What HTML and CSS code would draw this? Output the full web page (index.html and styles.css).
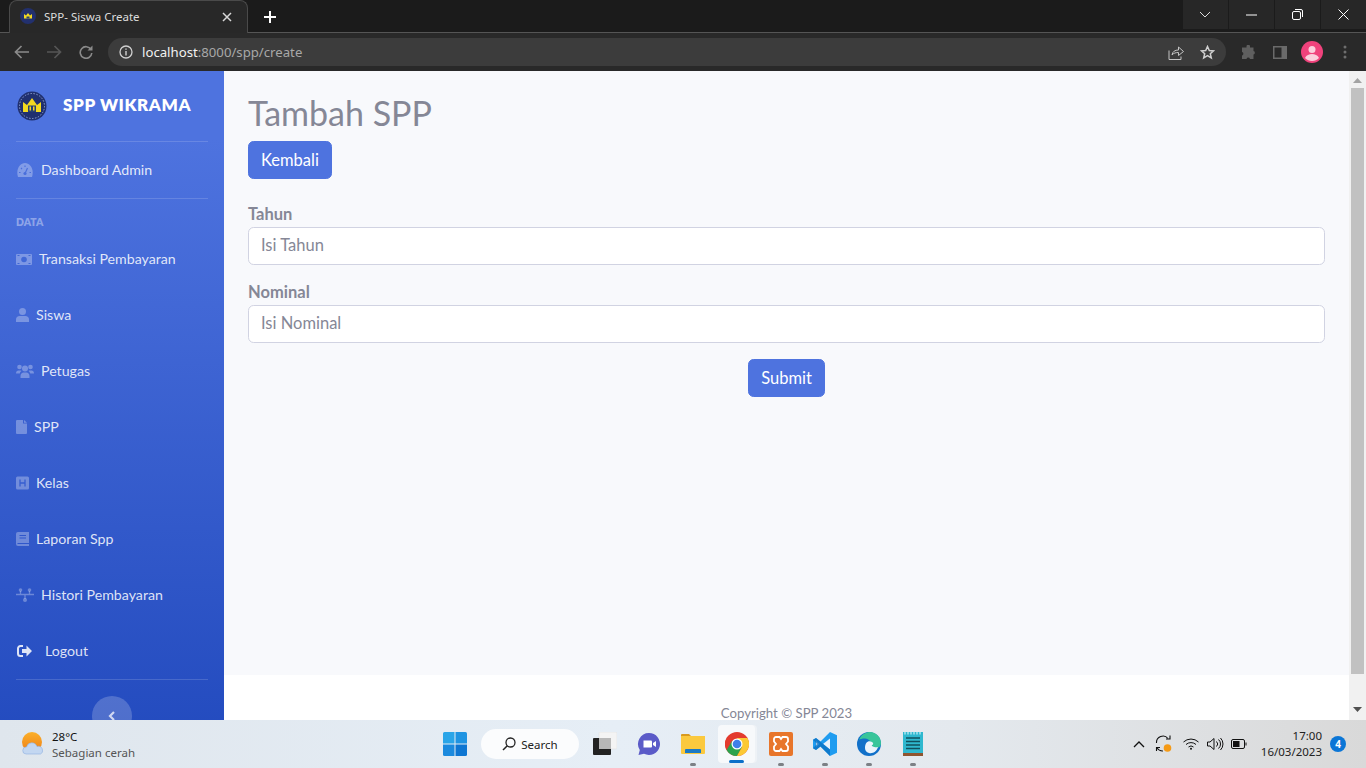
FILE: index.html
```html
<!DOCTYPE html>
<html lang="id">
<head>
<meta charset="utf-8">
<title>SPP- Siswa Create</title>
<link rel="stylesheet" href="styles.css">
</head>
<body>
<header class="browser">
  <div class="tabstrip">
    <div class="tab">
      <svg class="favicon" width="16" height="16" viewBox="0 0 16 16"><circle cx="8" cy="8" r="8" fill="#22306e"/><path d="M4 10.500V6l2 1.500L8 5l2 2.500L12 6v4.500z" fill="#f3d821"/><path d="M6.500 8.500h3v2h-3z" fill="#28406f"/></svg>
      <span class="tab-title">SPP- Siswa Create</span>
      <svg class="tab-close" width="10" height="10" viewBox="0 0 10 10"><path d="M1 1l8 8M9 1l-8 8" stroke="#d8d8d8" stroke-width="1.500"/></svg>
    </div>
    <svg class="newtab" width="12" height="12" viewBox="0 0 12 12"><path d="M6 0v12M0 6h12" stroke="#fff" stroke-width="2"/></svg>
    <div class="winctl">
      <div class="winbtn win-first"><svg width="12" height="8" viewBox="0 0 12 8"><path d="M1 1l5 5 5-5" fill="none" stroke="#ddd"/></svg></div>
      <div class="winbtn"><svg width="11" height="2" viewBox="0 0 11 2"><path d="M0 1h11" stroke="#fff"/></svg></div>
      <div class="winbtn"><svg width="11" height="11" viewBox="0 0 11 11"><rect x=".5" y="2.500" width="8" height="8" rx="1.500" fill="none" stroke="#fff"/><path d="M3 .5h6a1.500 1.500 0 0 1 1.500 1.500v6" fill="none" stroke="#fff"/></svg></div>
      <div class="winbtn"><svg width="11" height="11" viewBox="0 0 11 11"><path d="M.5.5l10 10M10.500.5l-10 10" stroke="#fff"/></svg></div>
    </div>
  </div>
  <div class="toolbar">
    <svg class="tb-back" width="16" height="14" viewBox="0 0 16 14"><path d="M15 7H2M7.500 1L1.500 7l6 6" fill="none" stroke="#8a8a8a" stroke-width="1.700"/></svg>
    <svg class="tb-fwd" width="16" height="14" viewBox="0 0 16 14"><path d="M1 7h13M8.500 1l6 6-6 6" fill="none" stroke="#565656" stroke-width="1.700"/></svg>
    <svg class="tb-reload" width="14" height="14" viewBox="0 0 14 14"><path d="M12 4.500A5.800 5.800 0 1 0 12.800 8" fill="none" stroke="#8a8a8a" stroke-width="1.600"/><path d="M13.500 .5v5h-5z" fill="#8a8a8a"/></svg>
    <div class="omnibox">
      <svg class="info" width="14" height="14" viewBox="0 0 14 14"><circle cx="7" cy="7" r="6" fill="none" stroke="#d0d0d0" stroke-width="1.300"/><path d="M7 6v4.500M7 3.500v1.300" stroke="#d0d0d0" stroke-width="1.400"/></svg>
      <span class="url"><b>localhost</b>:8000/spp/create</span>
      <svg class="share" width="16" height="15" viewBox="0 0 16 15"><path d="M1 5.500v9h12v-3" fill="none" stroke="#c4c4c4"/><path d="M4 10c.5-3.500 3-5 6.500-5V2l5 4.500-5 4V7.500C8 7.500 5.500 8 4 10z" fill="none" stroke="#c4c4c4"/></svg>
      <svg class="star" width="15" height="15" viewBox="0 0 15 15"><path d="M7.500 1.500l1.800 4 4.200.4-3.200 2.800 1 4.200-3.800-2.200-3.800 2.200 1-4.200L1.500 5.900l4.200-.4z" fill="none" stroke="#d0d0d0" stroke-width="1.500"/></svg>
    </div>
    <svg class="tb-ext" width="15" height="15" viewBox="0 0 15 15"><path d="M5.500 1a1.800 1.800 0 0 1 3.500 0v1.500h3.500V6a1.800 1.800 0 0 1 0 3.500V14H9a1.800 1.800 0 0 0-3.500 0H1v-3.500a1.800 1.800 0 0 0 0-3.500V2.500h4.500z" fill="#5f5f5f"/></svg>
    <svg class="tb-side" width="14" height="13" viewBox="0 0 14 13"><path d="M0 0h14v13H0z" fill="#6a6a6a"/><path d="M1.500 1.500h7v10h-7z" fill="#292929"/></svg>
    <svg class="tb-avatar" width="22" height="22" viewBox="0 0 22 22"><circle cx="11" cy="11" r="11" fill="#f0427c"/><circle cx="11" cy="8.500" r="3.500" fill="#fbcfdd"/><path d="M4 17c1.500-3 4-4 7-4s5.500 1 7 4c-1.800 2-4.300 3-7 3s-5.200-1-7-3z" fill="#fbcfdd"/></svg>
    <svg class="tb-menu" width="4" height="14" viewBox="0 0 4 14"><circle cx="2" cy="2" r="1.500" fill="#6e6e6e"/><circle cx="2" cy="7" r="1.500" fill="#6e6e6e"/><circle cx="2" cy="12" r="1.500" fill="#6e6e6e"/></svg>
  </div>
</header>

<div class="viewport">
  <nav class="sidebar">
    <div class="brand">
      <svg class="brand-logo" width="30" height="30" viewBox="0 0 30 30"><circle cx="15" cy="15" r="14.500" fill="#20306f"/><circle cx="15" cy="15" r="12.500" fill="none" stroke="#8c9fd0" stroke-dasharray="1.500 1.500"/><path d="M6 21v-10l4 3L15 7l5 7 4-3v10z" fill="#f2d91f"/><path d="M11 14.500h8V21h-8z" fill="#28406f"/><path d="M12.500 15.500h1.500v4h-1.500zM16 15.500h1.500v4H16z" fill="#f2d91f"/></svg>
      <span class="brand-text">SPP WIKRAMA</span>
    </div>
    <hr class="divider">
    <a class="nav-item nav-first">
      <svg width="18" height="14" viewBox="0 0 18 14"><path d="M2 14C-.5 6 4 0 9 0s9.500 6 7 14z" fill="currentColor"/><circle cx="9" cy="10.500" r="1.600" fill="#4a6fdc"/><path d="M9 10.500L11.500 5" stroke="#4a6fdc" stroke-width="1.200"/><path d="M3 9.500h1.500M13.500 9.500H15M5 5l1 1M9 2.500V4" stroke="#4a6fdc" stroke-width="1.200"/></svg>
      <span>Dashboard Admin</span>
    </a>
    <hr class="divider">
    <div class="nav-heading">DATA</div>
    <a class="nav-item">
      <svg width="16" height="11" viewBox="0 0 16 11"><rect width="16" height="11" rx="1" fill="currentColor"/><circle cx="8" cy="5.500" r="2.800" fill="#4168d6"/><path d="M1.500 1.500h2M12.500 1.500h2M1.500 9.500h2M12.500 9.500h2" stroke="#4168d6"/></svg>
      <span>Transaksi Pembayaran</span>
    </a>
    <a class="nav-item">
      <svg width="13" height="14" viewBox="0 0 13 14"><circle cx="6.500" cy="3.500" r="3.500" fill="currentColor"/><path d="M0 14v-2.500C0 9.300 1.500 8 3.500 8h6c2 0 3.500 1.300 3.500 3.500V14z" fill="currentColor"/></svg>
      <span>Siswa</span>
    </a>
    <a class="nav-item">
      <svg width="18" height="14" viewBox="0 0 18 14"><circle cx="3.500" cy="3" r="2.300" fill="currentColor"/><circle cx="14.500" cy="3" r="2.300" fill="currentColor"/><circle cx="9" cy="4.500" r="3" fill="currentColor"/><path d="M0 9.500c0-2 1-3 2.500-3h2c.5 0 1 .2 1 .5-1 .7-1.500 1.500-1.700 2.500zM18 9.500c0-2-1-3-2.500-3h-2c-.5 0-1 .2-1 .5 1 .7 1.500 1.500 1.700 2.500zM4.500 14v-2c0-2 1.500-3.500 3-3.500h3c1.500 0 3 1.500 3 3.500v2z" fill="currentColor"/></svg>
      <span>Petugas</span>
    </a>
    <a class="nav-item">
      <svg width="11" height="14" viewBox="0 0 11 14"><path d="M0 1a1 1 0 0 1 1-1h6v3.500h4V13a1 1 0 0 1-1 1H1a1 1 0 0 1-1-1zM8 0l3 2.800H8z" fill="currentColor"/></svg>
      <span>SPP</span>
    </a>
    <a class="nav-item">
      <svg width="13" height="14" viewBox="0 0 13 14"><rect y=".5" width="13" height="13" rx="1.500" fill="currentColor"/><path d="M4 3.500v7M9 3.500v7M4 7h5" stroke="#365dd0" stroke-width="1.300"/></svg>
      <span>Kelas</span>
    </a>
    <a class="nav-item">
      <svg width="13" height="14" viewBox="0 0 13 14"><path d="M2 0h11v14H2a2 2 0 0 1-2-2V2a2 2 0 0 1 2-2z" fill="currentColor"/><path d="M3.500 3.500h6.500M3.500 6h6.500M1.500 11.500H13" stroke="#2f57cb" stroke-width="1.100"/></svg>
      <span>Laporan Spp</span>
    </a>
    <a class="nav-item">
      <svg width="18" height="14" viewBox="0 0 18 14"><circle cx="4.500" cy="2" r="1.800" fill="currentColor"/><circle cx="13.500" cy="2" r="1.800" fill="currentColor"/><circle cx="9" cy="12" r="2" fill="currentColor"/><path d="M0 6.500h18M4.500 3v3.500M13.500 3v3.500M9 6.500V11" stroke="currentColor" stroke-width="1.300"/></svg>
      <span>Histori Pembayaran</span>
    </a>
    <a class="nav-item nav-logout">
      <svg width="22" height="12" viewBox="0 0 22 12"><path d="M7 1H4.500A2.500 2.500 0 0 0 2 3.500v5A2.500 2.500 0 0 0 4.500 11H7" fill="none" stroke="currentColor" stroke-width="2"/><path d="M6 4h4.500V.5L16 6l-5.500 5.500V8H6z" fill="currentColor"/></svg>
      <span>Logout</span>
    </a>
    <hr class="divider">
    <div class="toggler-wrap">
      <div class="toggler"><svg width="8" height="10" viewBox="0 0 8 10"><path d="M6 1L2 5l4 4" fill="none" stroke="#d0d8f2" stroke-width="2.200"/></svg></div>
    </div>
  </nav>

  <div class="page">
    <main class="content">
      <h1 class="title">Tambah SPP</h1>
      <a class="btn">Kembali</a>
      <form class="form">
        <div class="field">
          <label class="label">Tahun</label>
          <input class="input" type="text" placeholder="Isi Tahun">
        </div>
        <div class="field">
          <label class="label">Nominal</label>
          <input class="input" type="text" placeholder="Isi Nominal">
        </div>
        <div class="actions"><a class="btn">Submit</a></div>
      </form>
    </main>
    <footer class="footer">Copyright © SPP 2023</footer>
  </div>

  <div class="scrollbar">
    <svg class="sb-arrow" width="9" height="5" viewBox="0 0 9 5"><path d="M4.500 0L9 5H0z" fill="#a3a3a3"/></svg>
    <div class="sb-thumb"></div>
    <svg class="sb-arrow" width="9" height="5" viewBox="0 0 9 5"><path d="M0 0h9L4.500 5z" fill="#505050"/></svg>
  </div>
</div>

<footer class="taskbar">
  <div class="weather">
    <svg width="24" height="24" viewBox="0 0 24 24"><defs><linearGradient id="sun" x1="0" y1="0" x2="0" y2="1"><stop offset="0" stop-color="#fbb02a"/><stop offset="1" stop-color="#ee7f18"/></linearGradient></defs><circle cx="11" cy="10" r="10" fill="url(#sun)"/><path d="M5 22a3.500 3.500 0 0 1 .5-7 5.500 5.500 0 0 1 10.500-.5 4 4 0 0 1 5.500 3.500 3.500 3.500 0 0 1-2 4z" fill="#c3d7f1" stroke="#8fb0e0" stroke-width=".6"/></svg>
    <div class="weather-text"><div class="w-temp">28°C</div><div class="w-desc">Sebagian cerah</div></div>
  </div>
  <div class="apps">
    <svg class="start" width="24" height="24" viewBox="0 0 24 24"><path d="M0 1.500A1.500 1.500 0 0 1 1.500 0H11.500V11.500H0z" fill="#2aa5e8"/><path d="M12.500 0H22.500A1.500 1.500 0 0 1 24 1.500V11.500H12.500z" fill="#1f94e2"/><path d="M0 12.500H11.500V24H1.500A1.500 1.500 0 0 1 0 22.500z" fill="#1b8ade"/><path d="M12.500 12.500H24V22.500A1.500 1.500 0 0 1 22.500 24H12.500z" fill="#0e76d2"/></svg>
    <div class="search">
      <svg width="14" height="14" viewBox="0 0 14 14"><circle cx="8.500" cy="5.500" r="4.500" fill="none" stroke="#222" stroke-width="1.300"/><path d="M5.300 8.800L1 13" stroke="#222" stroke-width="1.500"/></svg>
      <span>Search</span>
    </div>
    <div class="app"><svg width="24" height="24" viewBox="0 0 24 24"><rect x="6" y="0" width="18" height="17" rx="1" fill="#f4f4f4" stroke="#ddd" stroke-width=".5"/><rect y="6" x="0" width="18" height="17" rx="1" fill="#222"/><rect x="6" y="6" width="12" height="11" fill="#b8b8b8"/></svg></div>
    <div class="app"><svg width="24" height="24" viewBox="0 0 24 24"><path d="M12 1a11 11 0 1 1-5 20.800L1.500 23l1.300-5A11 11 0 0 1 12 1z" fill="#5b5bc8"/><path d="M6.500 8.500h7.500a1 1 0 0 1 1 1v5a1 1 0 0 1-1 1H6.500z" fill="#fff"/><path d="M16 11l3-2v6l-3-2z" fill="#fff"/></svg></div>
    <div class="app dot"><svg width="24" height="22" viewBox="0 0 24 22"><path d="M0 2a1 1 0 0 1 1-1h7l2 2h-10z" fill="#d99a1f"/><path d="M0 3h24v17a1 1 0 0 1-1 1H1a1 1 0 0 1-1-1z" fill="#fbc93e"/><path d="M4 20v-3a1 1 0 0 1 1-1h14a1 1 0 0 1 1 1v3z" fill="#1b79c4"/></svg></div>
    <div class="app active"><svg width="24" height="24" viewBox="0 0 24 24"><circle cx="12" cy="12" r="12" fill="#e33b2e"/><path d="M12 12L1.600 18A12 12 0 0 1 3 4.400z" fill="#e33b2e"/><path d="M12 24A12 12 0 0 1 1.600 18L7 9l5 3 5 3z" fill="#2ba24c"/><path d="M12 24A12 12 0 0 0 22.400 6H12l5 9z" fill="#fcc934"/><circle cx="12" cy="12" r="5.500" fill="#fff"/><circle cx="12" cy="12" r="4.300" fill="#3f7fe8"/></svg></div>
    <div class="app dot"><svg width="24" height="24" viewBox="0 0 24 24"><rect width="24" height="24" rx="2" fill="#e8762b"/><path d="M7 5h3.500l1.500 2 1.500-2H17a2 2 0 0 1 2 2v2.500l-2 2.500 2 2.500V17a2 2 0 0 1-2 2h-3.500L12 17l-1.500 2H7a2 2 0 0 1-2-2v-2.500L7 12 5 9.500V7a2 2 0 0 1 2-2z" fill="none" stroke="#fff" stroke-width="1.800"/></svg></div>
    <div class="app dot"><svg width="24" height="24" viewBox="0 0 24 24"><path d="M17 0l7 3.200v17.600L17 24 7.500 14.500 3 18l-3-1.700V7.700L3 6l4.500 3.500z" fill="#1f9cf0"/><path d="M17 6.500L10 12l7 5.500z" fill="#eaf2fb"/><path d="M3 9v6l3-3z" fill="#eaf2fb"/><path d="M0 7.700L3 6l14 11.500V24L7.500 14.500 3 18l-3-1.700 4-4.300z" fill="#0b6fc0" opacity=".75"/></svg></div>
    <div class="app dot"><svg width="24" height="24" viewBox="0 0 24 24"><circle cx="12" cy="12" r="12" fill="#1170c9"/><path d="M2 8C4 2 10 0 13 0c6 0 11 5 11 11 0 3-2 5-5 5-2 0-4-1-4-2.500 0-3-3-7-7-7-3 0-5 .5-6 1.500z" fill="#38c59a"/><path d="M8 16c0-5 3-8 7-6 2 1 1 3 0 3-1 1 3 3 6 2-1 4-5 7-9 6-3-.5-4-3-4-5z" fill="#eaf3fb"/></svg></div>
    <div class="app dot"><svg width="20" height="24" viewBox="0 0 20 24"><rect width="20" height="24" fill="#2fb8cf"/><path d="M0 21h20v3H0z" fill="#8f5530"/><path d="M3 6h14M3 9.500h14M3 13h14M3 16.500h14" stroke="#10505e" stroke-width="1.300"/><path d="M2 0v2.500M5 0v2.500M8 0v2.500M11 0v2.500M14 0v2.500M17 0v2.500" stroke="#e6fbff"/></svg></div>
  </div>
  <div class="tray">
    <svg class="t-caret" width="12" height="7" viewBox="0 0 12 7"><path d="M1 6l5-5 5 5" fill="none" stroke="#111" stroke-width="1.300"/></svg>
    <svg class="t-sync" width="18" height="18" viewBox="0 0 18 18"><path d="M1.500 8A6.500 6.500 0 0 1 13 3.500M2 12.500A6.500 6.500 0 0 0 8 16" fill="none" stroke="#111" stroke-width="1.100"/><path d="M11 4h4V.5M5 12.500H1.500V16" fill="none" stroke="#111" stroke-width="1.100"/><circle cx="12.500" cy="13" r="3.800" fill="#f59a16"/></svg>
    <svg class="t-wifi" width="16" height="12" viewBox="0 0 16 12"><path d="M.5 4a11 11 0 0 1 15 0M3 6.500a7.500 7.500 0 0 1 10 0M5.500 9a3.800 3.800 0 0 1 5 0" fill="none" stroke="#111"/><circle cx="8" cy="10.800" r="1" fill="#111"/></svg>
    <svg class="t-vol" width="17" height="14" viewBox="0 0 17 14"><path d="M.5 5v4h2.500l4 3.500v-11L3 5z" fill="none" stroke="#111"/><path d="M9.500 4.500a3.500 3.500 0 0 1 0 5M11.500 2.500a6 6 0 0 1 0 9M13.500 1a8.500 8.500 0 0 1 0 12" fill="none" stroke="#111"/></svg>
    <svg class="t-bat" width="16" height="10" viewBox="0 0 16 10"><rect x=".5" y=".5" width="13" height="9" rx="1.500" fill="none" stroke="#111"/><rect x="2" y="2" width="6.500" height="6" fill="#111"/><path d="M14.500 3.500h1v3h-1z" fill="#111"/></svg>
    <div class="clock"><div>17:00</div><div>16/03/2023</div></div>
    <div class="badge">4</div>
  </div>
</footer>
</body>
</html>
```
FILE: styles.css
```css
* { box-sizing: border-box; }
html, body { margin: 0; height: 768px; overflow: hidden; }
body { display: flex; flex-direction: column; width: 1366px; font-family: Lato, "Noto Sans", sans-serif; }
svg { display: block; flex: none; }

/* browser chrome */
.browser { height: 71px; flex: none; display: flex; flex-direction: column; font-family: "Noto Sans", "Open Sans", sans-serif; }
.tabstrip { height: 33px; background: #1b1b1b; display: flex; align-items: flex-start; padding-left: 9px; border-bottom: 1px solid #555; flex: none; }
.tab { width: 239px; height: 33px; background: #282828; border: 1px solid #4a4a4a; border-bottom: none; border-radius: 8px 8px 0 0; display: flex; align-items: center; padding: 0 15px 2px 10px; }
.tab-close { margin-top: 2px; }
.tab-title { font-size: 11.500px; color: #dcdcdc; margin-left: 8px; flex: 1; white-space: nowrap; }
.newtab { margin: 11px 0 0 16px; }
.winctl { margin-left: auto; display: flex; height: 29px; gap: 1px; background: #1b1b1b; }
.winbtn { width: 45px; height: 29px; background: #272727; display: flex; align-items: center; justify-content: center; }
.win-first { padding-right: 2px; }
.toolbar { height: 38px; background: #292929; display: flex; align-items: center; flex: none; padding-left: 14px; }
.tb-fwd { margin-left: 16px; }
.tb-reload { margin-left: 17px; }
.omnibox { width: 1118px; height: 28px; margin-left: 15px; background: #3c3c3c; border-radius: 14px; display: flex; align-items: center; padding: 0 11px; }
.url { margin-left: 9px; font-size: 13.200px; color: #a8a8a8; flex: 1; white-space: nowrap; }
.url b { color: #f2f2f2; font-weight: 400; }
.star { margin-left: 16px; }
.tb-ext { margin-left: 15px; }
.tb-side { margin-left: 17px; }
.tb-avatar { margin-left: 14px; }
.tb-menu { margin-left: 20px; }

/* page frame */
.viewport { height: 649px; flex: none; display: flex; overflow: hidden; }
.sidebar { width: 224px; flex: none; overflow: hidden; display: flex; flex-direction: column; background: linear-gradient(180deg, #4e73df 10%, #224abe 100%) top / 100% 680px no-repeat; color: #fff; }
.brand { height: 70px; flex: none; display: flex; align-items: center; padding: 0 0 1px 17px; }
.brand-text { margin-left: 16px; padding-bottom: 2px; font-size: 17px; font-weight: 800; letter-spacing: .6px; white-space: nowrap; }
.divider { margin: 0 16px; height: 1px; flex: none; border: 0; background: rgba(255,255,255,.15); }
.nav-item { height: 56px; flex: none; display: flex; align-items: center; gap: 7px; padding-left: 16px; color: rgba(255,255,255,.3); }
.nav-item span { padding-bottom: 2px; font-size: 14.200px; color: rgba(255,255,255,.85); white-space: nowrap; }
.nav-logout { color: rgba(255,255,255,.85); }
.nav-heading { height: 18px; margin-top: 14px; padding-left: 16px; font-size: 10.400px; font-weight: 800; line-height: 19px; color: rgba(255,255,255,.4); flex: none; }
.toggler-wrap { display: flex; justify-content: center; padding-top: 16px; flex: none; }
.toggler { width: 40px; height: 40px; border-radius: 50%; background: rgba(255,255,255,.2); display: flex; align-items: center; justify-content: center; }

.page { width: 1125px; flex: none; display: flex; flex-direction: column; background: #fff; }
.content { height: 604px; flex: none; background: #f8f9fc; padding: 24px; color: #858796; }
.title { margin: 0 0 8px; height: 38px; font-size: 34px; line-height: 35px; font-weight: 400; white-space: nowrap; }
.btn { display: inline-block; height: 38px; line-height: 36px; padding: 0 12px; border: 1px solid #4e73df; border-radius: 5.600px; background: #4e73df; color: #fff; font-size: 16.500px; }
.form { margin-top: 24px; }
.field { margin-bottom: 16px; }
.label { display: block; height: 24px; line-height: 23px; margin-bottom: 0; font-size: 16.500px; font-weight: 700; }
.input { display: block; width: 100%; height: 38px; padding: 0 12px 3px; border: 1px solid #d1d3e2; border-radius: 5.600px; background: #fff; font: inherit; font-size: 16.500px; color: #6e707e; outline: 0; }
.input::placeholder { color: #858796; opacity: 1; }
.actions { display: flex; justify-content: center; }
.footer { flex: 1; padding-top: 30px; text-align: center; font-size: 13.200px; line-height: 16px; color: #858796; }
.scrollbar { width: 17px; flex: none; background: #f1f1f1; display: flex; flex-direction: column; align-items: center; padding: 7px 0 8px; }
.sb-thumb { width: 13px; height: 586px; margin-top: 5px; background: #c1c1c1; flex: none; }
.sb-arrow + .sb-thumb + .sb-arrow { margin-top: auto; }

/* taskbar */
.taskbar { height: 48px; flex: none; display: flex; align-items: center; background: linear-gradient(90deg, #dfe6ed 0%, #e6eef6 45%, #e4e9ee 70%, #d9d9d9 100%); font-family: "Noto Sans", "Open Sans", sans-serif; font-size: 12px; color: #111; }
.weather { width: 443px; flex: none; display: flex; align-items: center; padding-left: 21px; }
.weather-text { margin-left: 7px; padding-top: 2px; line-height: 16px; font-size: 11.500px; }
.w-desc { color: #555; }
.apps { display: flex; align-items: center; }
.search { width: 98px; height: 30px; margin: 0 4px 0 14px; background: #fbfcfd; border-radius: 15px; display: flex; align-items: center; justify-content: center; gap: 5px; font-size: 11.500px; color: #222; padding-right: 0; }
.app { width: 44px; height: 44px; display: flex; align-items: center; justify-content: center; position: relative; }
.dot::after { content: ""; position: absolute; bottom: 0; left: 19px; width: 6px; height: 3px; border-radius: 2px; background: #7c8085; }
.active { width: 37px; margin: 0 4px 0 3px; height: 38px; background: #f7f9fb; border-radius: 4px; box-shadow: 2px 0 0 #eef2f6; }
.active::after { content: ""; position: absolute; bottom: 0; left: 11px; width: 15px; height: 3px; border-radius: 2px; background: #0a6fc9; }
.tray { margin-left: auto; display: flex; align-items: center; padding-right: 20px; }
.t-sync { margin-left: 10px; }
.t-wifi { margin-left: 10px; }
.t-vol { margin-left: 8px; }
.t-bat { margin-left: 7px; }
.clock { margin-left: 14px; text-align: right; font-size: 11.500px; line-height: 16px; color: #222; }
.badge { width: 16px; height: 16px; margin-left: 8px; border-radius: 50%; background: #0b76d6; color: #fff; font-size: 10px; font-weight: 700; line-height: 16px; text-align: center; }
```
